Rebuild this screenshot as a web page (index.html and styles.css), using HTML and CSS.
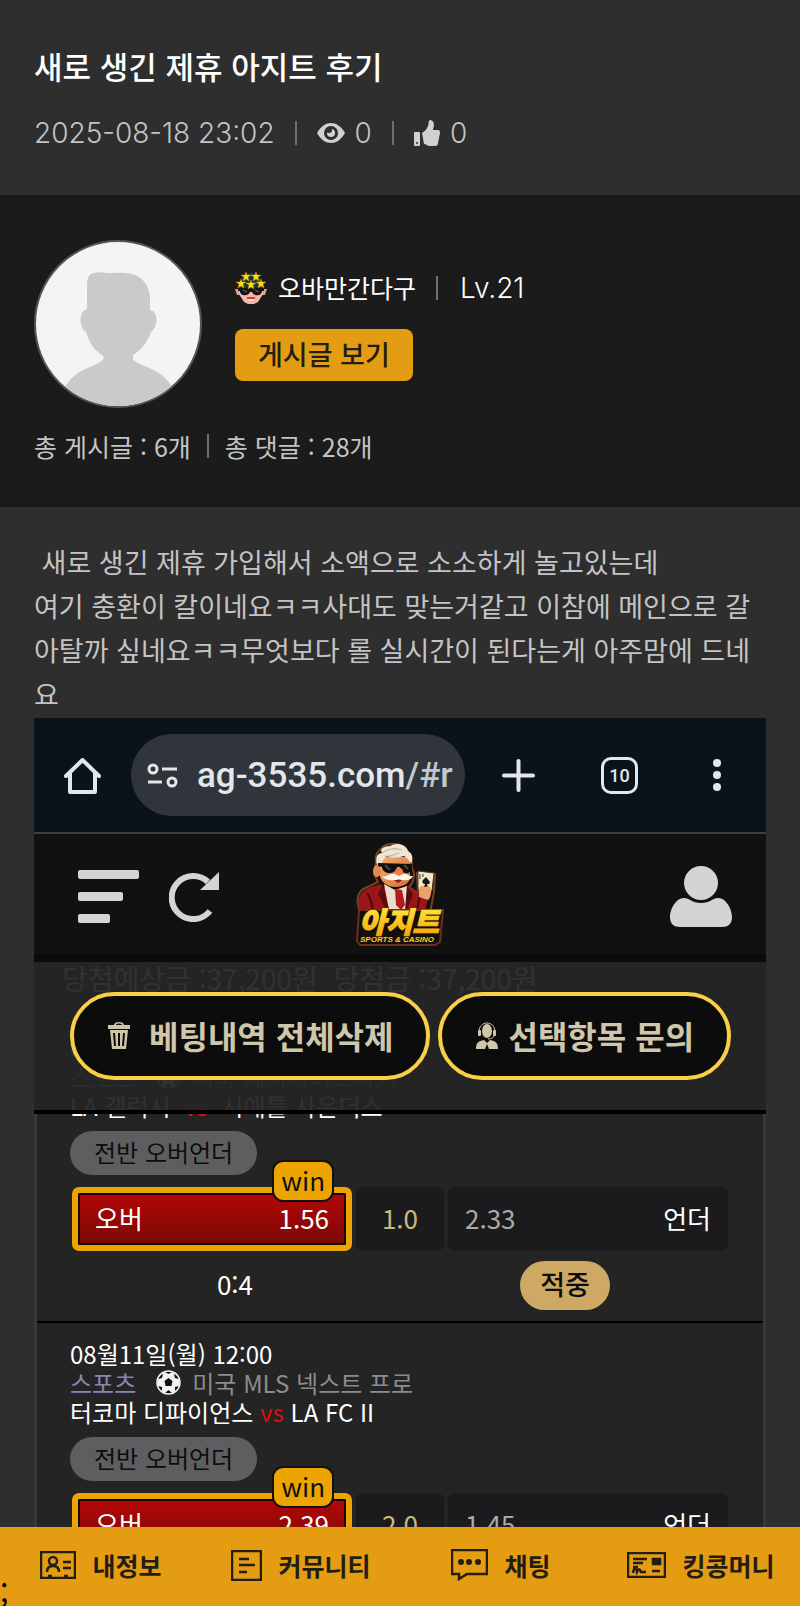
FILE: index.html
```
<!DOCTYPE html>
<html lang="ko">
<head>
    <meta charset="UTF-8">
    <meta name="viewport" content="width=device-width, initial-scale=1.0">
    <title>새로 생긴 제휴 아지트 후기</title>
    <link rel="stylesheet" href="styles.css">
</head>
<body>
    <main>
        <header class="post-header">
            <h1>새로 생긴 제휴 아지트 후기</h1>
            <div class="post-meta">
                <time datetime="2025-08-18T23:02">2025-08-18 23:02</time>
                <span class="bar"></span>
                <span class="count">
                    <svg width="28" height="20" viewBox="0 0 28 20" aria-label="조회">
                        <path d="M0 10C4 3 9 0 14 0s10 3 14 10c-4 7-9 10-14 10S4 17 0 10z" fill="#d0d0d0"/>
                        <circle cx="14" cy="10" r="7" fill="#2e2e2e"/>
                        <circle cx="14" cy="10" r="4" fill="#d0d0d0"/>
                        <circle cx="12" cy="7" r="3" fill="#2e2e2e"/>
                    </svg>
                    0
                </span>
                <span class="bar"></span>
                <span class="count">
                    <svg width="26" height="26" viewBox="0 0 26 26" aria-label="추천">
                        <path d="M1 12h4a1 1 0 0 1 1 1v12a1 1 0 0 1-1 1H1a1 1 0 0 1-1-1V13a1 1 0 0 1 1-1z" fill="#d0d0d0"/>
                        <circle cx="3" cy="23" r="1" fill="#2e2e2e"/>
                        <path d="M8 13c3-2 5-4 6-7 1-2 0-5 2-6 3 0 4 3 4 5s-1 3-1 5h5c2 0 2 2 2 3l-2 10c0 2-1 3-3 3h-5c-3 0-4-2-6-2z" fill="#d0d0d0"/>
                    </svg>
                    0
                </span>
            </div>
        </header>

        <section class="profile">
            <div class="profile-top">
                <svg class="avatar" viewBox="0 0 168 168" aria-label="프로필">
                    <defs><clipPath id="face"><circle cx="84" cy="84" r="82"/></clipPath></defs>
                    <circle cx="84" cy="84" r="83" fill="#f4f4f6" stroke="#555" stroke-width="2"/>
                    <path clip-path="url(#face)" fill="#cacacc" d="M60 33c8-2 12 1 18 0 16-1 34-1 38 23v14c8 1 9 16 1 22-4 11-9 17-18 23v5c8 6 22 8 32 18 8 8 12 16 14 30H24c2-14 6-22 14-30 10-10 24-12 31-18 1-2 1-3-1-5-9-6-13-13-16-23-8-6-7-21 1-23V44c0-6 2-10 7-11z"/>
                </svg>
                <div class="profile-info">
                    <div class="name-row">
                        <svg class="rank" width="32" height="32" viewBox="0 0 32 32">
                            <path d="M5 14C5 4 10 1 16 1s11 3 11 13v5H5z" fill="#17372d"/>
                            <path d="M0 17h5v6H2zM32 17h-5v6h3z" fill="#e99b8b"/>
                            <path d="M4 16h24v6l-5 8-4 2h-6l-4-2-5-8z" fill="#f3b7a5"/>
                            <path d="M3 16h26v3h-2c0 5-8 6-10 1h-2c-2 5-10 4-10-1H3z" fill="#151515"/>
                            <path d="M8 18l4 2M20 18l4 2" stroke="#777"/>
                            <path d="M12 25h8v2h-8z" fill="#c9423a"/>
                            <path d="M13 28h6" stroke="#fff"/>
                            <g fill="#ffd91f" stroke="#c99a00" stroke-width=".4">
                                <path id="star" d="M11 0l1 3h4l-3 2 1 4-3-2-3 2 1-4-3-2h4z"/>
                                <use href="#star" x="10"/>
                                <use href="#star" x="-5" y="7"/>
                                <use href="#star" x="5" y="8"/>
                                <use href="#star" x="15" y="7"/>
                            </g>
                        </svg>
                        <span class="name">오바만간다구</span>
                        <span class="bar"></span>
                        <span class="level">Lv.21</span>
                    </div>
                    <button type="button" class="posts-btn">게시글 보기</button>
                </div>
            </div>
            <div class="stats">
                <span>총 게시글 : 6개</span>
                <span class="bar"></span>
                <span>총 댓글 : 28개</span>
            </div>
        </section>

        <article class="post-body">
            <p>&nbsp;새로 생긴 제휴 가입해서 소액으로 소소하게 놀고있는데<br>여기 충환이 칼이네요ㅋㅋ사대도 맞는거같고 이참에 메인으로 갈<br>아탈까 싶네요ㅋㅋ무엇보다 롤 실시간이 된다는게 아주맘에 드네<br>요</p>

            <div class="capture">
                <div class="browser">
                    <button type="button" class="home" aria-label="홈">
                        <svg width="37" height="37" viewBox="0 0 37 37" fill="none" stroke="#e3e6ea" stroke-width="4" stroke-linejoin="round" stroke-linecap="round">
                            <path d="M2 19L18.500 3 35 19M6 16v19h25V16"/>
                        </svg>
                    </button>
                    <a class="address" href="#r">
                        <svg width="32" height="26" viewBox="0 0 32 26" fill="none" stroke="#e3e6ea" stroke-width="3">
                            <circle cx="6" cy="7" r="4"/><path d="M15 7h15M1 20h14"/><circle cx="25" cy="20" r="4"/>
                        </svg>
                        <span>ag-3535.com<span class="path">/#r</span></span>
                    </a>
                    <button type="button" class="plus" aria-label="새 탭">
                        <svg width="33" height="33" viewBox="0 0 33 33" stroke="#e3e6ea" stroke-width="4" stroke-linecap="round"><path d="M16.500 2v29M2 16.500h29"/></svg>
                    </button>
                    <button type="button" class="tabs">10</button>
                    <button type="button" class="more" aria-label="메뉴">
                        <svg width="10" height="34" viewBox="0 0 10 34" fill="#e3e6ea"><circle cx="5" cy="5" r="4"/><circle cx="5" cy="17" r="4"/><circle cx="5" cy="29" r="4"/></svg>
                    </button>
                </div>

                <div class="site-header">
                    <div class="left">
                        <button type="button" aria-label="전체 메뉴">
                            <svg width="61" height="54" viewBox="0 0 61 54" fill="#d4d4d4"><rect width="61" height="9" rx="2"/><rect y="22" width="45" height="9" rx="2"/><rect y="44" width="32" height="9" rx="2"/></svg>
                        </button>
                        <button type="button" aria-label="새로고침">
                            <svg width="50" height="50" viewBox="0 0 50 50">
                                <path d="M41 39A21.500 21.500 0 1 1 39 10" fill="none" stroke="#d4d4d4" stroke-width="6"/>
                                <path d="M50 0v18H31z" fill="#d4d4d4"/>
                            </svg>
                        </button>
                    </div>
                    <a href="#" class="logo">
                        <svg width="88" height="104" viewBox="-1 -1 88 104">
                            <defs>
                                <linearGradient id="gold" x1="0" y1="0" x2="0" y2="1"><stop offset="0.2" stop-color="#ffe63c"/><stop offset="1" stop-color="#f59a00"/></linearGradient>
                                <linearGradient id="skin" x1="0" y1="0" x2="1" y2="1"><stop offset="0" stop-color="#f6ae72"/><stop offset="1" stop-color="#d46a34"/></linearGradient>
                            </defs>
                            <path d="M19 20c-2-10 4-13 8-17 10-5 21-1 24 6 6 4 3 10 4 16 4 5 2 14-3 19l9 6-1-20 18 1-1 18-4 22H5C-1 62-1 52 6 46l15-7-4-8z" fill="#1b0d08" stroke="#75432a" stroke-width="2"/>
                            <path d="M3 67c-4-9 0-18 8-22l13-4 13 14 13-12 14 8 8 2-4 14H3z" fill="#9c1618"/>
                            <path d="M10 50c4 5 4 10 6 17M63 53l-3 14" stroke="#440a0c" stroke-width="2" fill="none"/>
                            <path d="M27 41l5 26h17l1-24-12 4z" fill="#e9dfcc"/>
                            <path d="M38 46l7 1 3 15-4 5-5-5z" fill="#b51920"/>
                            <path d="M26 41l-5 10 8 16h3zM50 43l6 8-6 16h-2z" fill="#5c0c10"/>
                            <path d="M23 14h30v19c1 7-7 11-14 11-9 0-15-5-16-11z" fill="url(#skin)"/>
                            <ellipse cx="20" cy="28" rx="4" ry="6" fill="#e48952"/>
                            <path d="M20 22c-2-7 0-12 5-12-3-4 2-7 8-7 6-4 16-2 18 5 5 3 5 8 3 13-2-4-4-6-7-8-6 2-12 2-17 0-3 2-5 5-6 9z" fill="#eee5d3"/>
                            <path d="M25 10c7-5 14-5 20-3M28 13c6 1 10-2 14-3" stroke="#b9a98c" fill="none"/>
                            <path d="M21 20l34 1v6c-3 5-11 4-12-3h-3c-1 8-14 8-15 0l-4-1z" fill="#11100f"/>
                            <path d="M28 22l5 5M47 22l4 4" stroke="#4a463f" stroke-width="2"/>
                            <ellipse cx="42" cy="29" rx="4" ry="4" fill="#f27d43"/>
                            <path d="M25 33c4 2 7-3 13-2l4 2 4-2c4-1 6 3 10 2-2 5-10 5-14 3-5 2-14 2-17-3z" fill="#fff7e6"/>
                            <path d="M37 37h8l-4 3z" fill="#8e1818"/>
                            <path d="M61 28l16 2-2 18-14-1z" fill="#f2e7c9" stroke="#443622"/>
                            <path d="M69 34l4 5c0 3-3 2-3 2l1 3h-4l1-3c-3 0-3-3-2-4z" fill="#181818"/>
                            <path d="M63 31v5M66 31v3" stroke="#333"/>
                            <path d="M62 46c1-4 4-4 6-2l4-1c4 2 2 12-1 14l-9-3z" fill="#f1a063"/>
                            <path d="M2 67h84l-3 32-5 3H3l-3-4z" fill="#160e08" stroke="#67331d" stroke-width="2"/>
                            <text x="2" y="90" class="logo-name">아지트</text>
                            <text x="3" y="99" class="logo-sub">SPORTS &amp; CASINO</text>
                        </svg>
                    </a>
                    <button type="button" class="user" aria-label="내 계정">
                        <svg width="62" height="62" viewBox="0 0 62 62" fill="#d4d4d4">
                            <circle cx="31" cy="17" r="17"/>
                            <path d="M14 32c5 0 8 5 17 5s12-5 17-5c8 0 14 11 14 19 0 7-4 10-10 10H10C4 61 0 58 0 51c0-8 6-19 14-19z"/>
                        </svg>
                    </button>
                </div>

                <div class="bets">
                    <div class="toolbar">
                        <button type="button" class="tool wide">
                            <svg width="22" height="27" viewBox="0 0 22 27" fill="#cfc6ab">
                                <path d="M0 3h6c0-4 10-4 10 0h6v4H0zm8 0h6c0-2-6-2-6 0z"/>
                                <path d="M2 8h18l-2 19H4zm3 3l1 13h2L7 11zm5 0v13h2V11zm5 0l-1 13h2l1-13z" fill-rule="evenodd"/>
                            </svg>
                            베팅내역 전체삭제
                        </button>
                        <button type="button" class="tool">
                            <svg width="22" height="27" viewBox="0 0 22 27" fill="#cfc6ab">
                                <path d="M3 10C3-2 19-2 19 10" fill="none" stroke="#cfc6ab"/>
                                <rect x="2" y="8" width="3" height="6" rx="1"/><rect x="17" y="8" width="3" height="6" rx="1"/>
                                <ellipse cx="11" cy="9" rx="5" ry="7"/>
                                <path d="M18 13c0 3-3 4-6 4" fill="none" stroke="#cfc6ab"/>
                                <path d="M0 27c0-6 2-8 8-9l3 3 3-3c6 1 8 3 8 9h-9l-2-5-2 5z"/>
                            </svg>
                            선택항목 문의
                        </button>
                    </div>

                    <p class="payout">당첨예상금 :37,200원&nbsp; 당첨금 :37,200원</p>

                    <section class="bet">
                        <p>08월11일(월) 11:30</p>
                        <p class="league"><span class="sport">스포츠</span>
                            <svg class="ball" viewBox="0 0 25 25"><use href="#football"/></svg>미국 메이저리그사커</p>
                        <p>LA 갤럭시 &nbsp;<span class="vs">vs</span>&nbsp; 시애틀 사운더스</p>
                        <span class="market">전반 오버언더</span>
                        <div class="odds">
                            <button type="button" class="pick won"><span>오버</span><span>1.56</span><span class="win">win</span></button>
                            <span class="line">1.0</span>
                            <button type="button" class="pick"><span class="rate">2.33</span><span>언더</span></button>
                        </div>
                        <div class="result"><span>0:4</span><strong>적중</strong></div>
                    </section>

                    <section class="bet">
                        <p>08월11일(월) 12:00</p>
                        <p class="league"><span class="sport">스포츠</span>
                            <svg class="ball" viewBox="0 0 25 25">
                                <g id="football">
                                    <circle cx="12.500" cy="12.500" r="11" fill="#f2f2f2"/>
                                    <path d="M12.500 8l4 3-1 5h-6l-1-5zM9 2l3.500 2L16 2zM2 9l4-1 1-4C4 5 2 7 2 9zM23 9l-4-1-1-4c3 1 5 3 5 5zM2 16l4 1v4c-2-1-4-3-4-5zM23 16l-4 1v4c2-1 4-3 4-5zM9 23l3.500-3 3.500 3z" fill="#111"/>
                                    <circle cx="12.500" cy="12.500" r="11.500" fill="none" stroke="#f2f2f2" stroke-width="1.500"/>
                                </g>
                            </svg>미국 MLS 넥스트 프로</p>
                        <p>터코마 디파이언스 <span class="vs">vs</span> LA FC II</p>
                        <span class="market">전반 오버언더</span>
                        <div class="odds">
                            <button type="button" class="pick won"><span>오버</span><span>2.39</span><span class="win">win</span></button>
                            <span class="line">2.0</span>
                            <button type="button" class="pick"><span class="rate">1.45</span><span>언더</span></button>
                        </div>
                    </section>
                </div>
            </div>
        </article>
    </main>

    <nav class="bottom-nav">
        <a href="#">
            <svg width="36" height="28" viewBox="0 0 36 28" fill="none" stroke="#231d12" stroke-width="2.500">
                <rect x="1" y="1" width="34" height="26"/>
                <circle cx="13" cy="10" r="4"/><path d="M7 21c0-4 2-6 6-6s6 2 6 6M23 11h8M23 17h8M8 25h4M24 25h4"/>
            </svg>
            내정보
        </a>
        <a href="#">
            <svg width="31" height="31" viewBox="0 0 31 31" fill="none" stroke="#231d12" stroke-width="2.500">
                <rect x="1" y="1" width="29" height="29"/><path d="M8 9h10M8 15h16M8 22h8"/>
            </svg>
            커뮤니티
        </a>
        <a href="#">
            <svg width="37" height="32" viewBox="0 0 37 32" fill="none" stroke="#231d12" stroke-width="2.500">
                <path d="M1 1h35v24H16l-8 5v-5H1z"/>
                <g fill="#231d12" stroke="none"><circle cx="10" cy="13" r="3"/><circle cx="18" cy="13" r="3"/><circle cx="27" cy="13" r="3"/></g>
            </svg>
            채팅
        </a>
        <a href="#">
            <svg width="39" height="26" viewBox="0 0 39 26" fill="none" stroke="#231d12" stroke-width="2.500">
                <rect x="1" y="1" width="37" height="24"/>
                <path d="M6 7h14M6 11h10M6 21c1-6 3-6 4-1 2-4 3-3 4 0h5M6 15h5M25 19h8"/>
                <rect x="26" y="7" width="7" height="5" fill="#231d12"/>
            </svg>
            킹콩머니
        </a>
        <span class="stray">;</span>
    </nav>
</body>
</html>
```

FILE: styles.css
```
* {
    box-sizing: border-box;
}
body {
    margin: 0;
    height: 100vh;
    display: flex;
    flex-direction: column;
    overflow: hidden;
    background-color: #2e2e2e;
    color: #c4c4c4;
    font-family: "Noto Sans CJK KR", sans-serif;
}
main {
    flex: 1;
    min-height: 0;
    overflow: hidden;
}
h1, p {
    margin: 0;
}
a {
    color: inherit;
    text-decoration: none;
}
button {
    margin: 0;
    padding: 0;
    border: none;
    background: none;
    color: inherit;
    font: inherit;
    cursor: pointer;
}
svg {
    display: block;
    flex: none;
}
.bar {
    width: 2px;
    height: 24px;
    background-color: #707070;
}

/* title */
.post-header {
    padding: 44px 34px 42px;
}
h1 {
    font-size: 31px;
    line-height: 44px;
    font-weight: 500;
    color: #fff;
}
.post-meta {
    display: flex;
    align-items: center;
    gap: 20px;
    margin-top: 25px;
    font-family: Inter, sans-serif;
    font-weight: 300;
    font-size: 28px;
    line-height: 40px;
}
.count {
    display: flex;
    align-items: center;
    gap: 10px;
}

/* writer */
.profile {
    padding: 45px 34px 42px;
    background-color: #1b1b1b;
}
.profile-top {
    display: flex;
    align-items: center;
    gap: 33px;
}
.avatar {
    width: 168px;
    height: 168px;
}
.name-row {
    display: flex;
    align-items: center;
    margin-bottom: 21px;
    line-height: 40px;
    color: #fff;
}
.name {
    margin: 0 20px 0 11px;
    padding-bottom: 2px;
    font-size: 25px;
    line-height: 38px;
}
.level {
    margin-left: 22px;
    font-family: Inter, sans-serif;
    font-weight: 300;
    font-size: 28px;
}
.posts-btn {
    display: block;
    padding: 0 23px 2px;
    border-radius: 8px;
    background-color: #e49c13;
    color: #231d12;
    font-size: 27px;
    font-weight: 500;
    line-height: 50px;
}
.stats {
    display: flex;
    align-items: center;
    gap: 16px;
    margin-top: 20px;
    padding-bottom: 1px;
    font-size: 25px;
    line-height: 36px;
}

/* post */
.post-body {
    padding: 33px 34px 0;
}
.post-body > p {
    padding-bottom: 2px;
    font-size: 27px;
    line-height: 44px;
    white-space: nowrap;
}
.browser {
    display: flex;
    align-items: center;
    padding: 0 44px 0 30px;
    height: 116px;
    border-bottom: 2px solid #3a4047;
    background-color: #0b131a;
    color: #e3e6ea;
    font-family: Roboto, sans-serif;
}
.address {
    flex: 1;
    display: flex;
    align-items: center;
    gap: 18px;
    margin: 0 37px 0 30px;
    padding-left: 16px;
    height: 82px;
    border-radius: 41px;
    background-color: #2f353b;
    font-size: 35px;
    font-weight: 500;
}
.path {
    color: #c0c8d0;
}
.tabs {
    width: 37px;
    height: 37px;
    margin: 0 74px 0 66px;
    border: 3px solid #e3e6ea;
    border-radius: 10px;
    font-size: 18px;
    font-weight: 500;
}
.site-header {
    display: grid;
    grid-template-columns: 1fr auto 1fr;
    align-items: center;
    height: 128px;
    padding: 0 34px;
    border-bottom: 8px solid #0b0b0b;
    background-color: #111;
}
.left {
    display: flex;
    align-items: center;
    gap: 30px;
    padding: 6px 0 0 10px;
}
.user {
    justify-self: end;
    padding-top: 6px;
}
.logo-name {
    font-family: "Noto Sans CJK KR", sans-serif;
    font-size: 29px;
    font-weight: 900;
    font-style: italic;
    fill: url(#gold);
    stroke: url(#gold);
    stroke-width: 1px;
}
.logo-sub {
    font-family: "Liberation Sans", sans-serif;
    font-size: 8px;
    font-weight: bold;
    font-style: italic;
    fill: #ffd21f;
}

/* betting list */
.bets {
    position: relative;
    border: solid #383838;
    border-width: 0 3px;
    background-color: #242424;
    color: #fff;
}
.toolbar {
    position: absolute;
    z-index: 2;
    top: 0;
    left: -3px;
    right: -3px;
    display: flex;
    gap: 8px;
    padding: 30px 36px;
    border-bottom: 4px solid #000;
    background-color: rgba(36, 36, 36, 0.94);
}
.tool {
    display: flex;
    align-items: center;
    gap: 10px;
    height: 88px;
    padding: 0 33px 2px 34px;
    border: 4px solid #f8cf47;
    border-radius: 44px;
    background-color: #0c0c0c;
    color: #cfc6ab;
    font-size: 32px;
    font-weight: 700;
    white-space: nowrap;
}
.wide {
    gap: 19px;
}
.payout {
    height: 55px;
    padding-left: 25px;
    font-size: 28px;
    line-height: 32px;
}
.bet {
    padding: 16px 33px 11px;
    border-bottom: 2px solid #000;
    font-size: 24px;
    line-height: 29px;
}
.league {
    display: flex;
    align-items: center;
    color: #8c8c8c;
}
.sport {
    color: #8d84b4;
}
.ball {
    width: 25px;
    height: 25px;
    margin: 0 11px 0 20px;
}
.vs {
    color: #d80f0f;
}
.market {
    display: block;
    width: fit-content;
    margin: 11px 0 12px;
    padding: 0 24px 2px;
    border-radius: 22px;
    background-color: #5e5e60;
    color: #0d0d0d;
    line-height: 42px;
}
.odds {
    display: grid;
    grid-template-columns: 1fr 88px 1fr;
    gap: 4px;
    margin: 0 2px 10px;
    font-size: 26px;
}
.pick, .line {
    display: flex;
    align-items: center;
    justify-content: space-between;
    height: 64px;
    padding: 0 17px 3px;
    border-radius: 7px;
    background-color: #1b1b1d;
}
.line {
    justify-content: center;
    color: #cdb87c;
}
.rate {
    color: #aaa;
}
.won {
    position: relative;
    border: 6px solid #eda400;
    box-shadow: inset 0 0 0 2px #140303;
    background: linear-gradient(#b50707, #780a05);
}
.win {
    position: absolute;
    top: -33px;
    right: 12px;
    padding: 0 7px 2px;
    border: 2px solid #111;
    border-radius: 11px;
    background-color: #eda400;
    color: #111;
    line-height: 36px;
}
.result {
    display: grid;
    grid-template-columns: 1fr 1fr;
    justify-items: center;
    font-size: 26px;
    line-height: 45px;
}
.result strong {
    padding: 0 20px 4px;
    border-radius: 25px;
    background-color: #cda963;
    color: #0d0d0d;
    font-weight: 500;
    font-size: 27px;
}

/* bottom menu */
.bottom-nav {
    position: relative;
    z-index: 3;
    display: grid;
    grid-template-columns: repeat(4, 1fr);
    height: 79px;
    padding-bottom: 3px;
    background-color: #e49c13;
    color: #231d12;
    font-size: 25px;
    font-weight: 700;
}
.bottom-nav a {
    display: flex;
    align-items: center;
    justify-content: center;
    gap: 16px;
    padding-left: 2px;
    white-space: nowrap;
}
.stray {
    position: absolute;
    left: 0;
    bottom: -4px;
    color: #000;
    font-size: 30px;
    font-weight: 400;
    line-height: 36px;
}
```
